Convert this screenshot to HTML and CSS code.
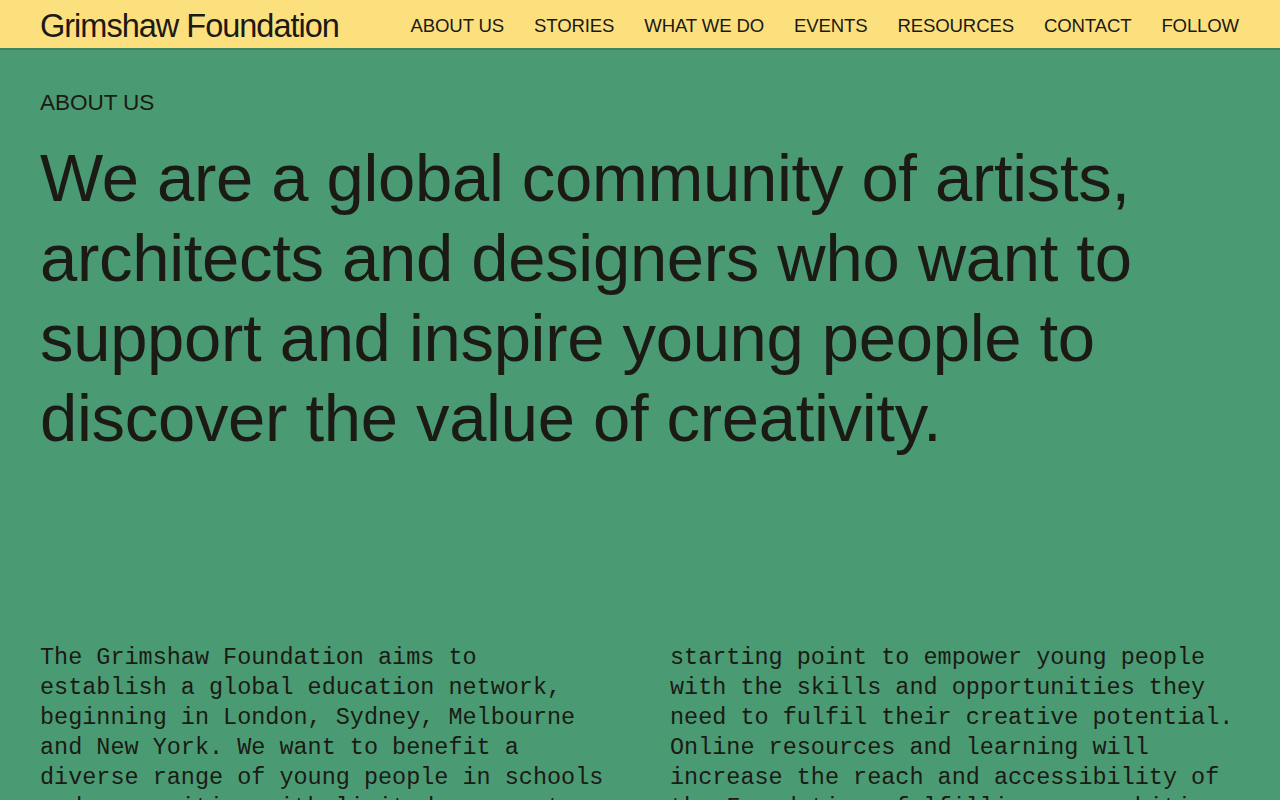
FILE: index.html
```html
<!DOCTYPE html>
<html lang="en">
<head>
<meta charset="utf-8">
<title>Grimshaw Foundation — About us</title>
<link rel="stylesheet" href="styles.css">
</head>
<body>
<header class="site-header">
  <a class="logo" href="#">Grimshaw Foundation</a>
  <nav class="nav">
    <a href="#">ABOUT US</a>
    <a href="#">STORIES</a>
    <a href="#">WHAT WE DO</a>
    <a href="#">EVENTS</a>
    <a href="#">RESOURCES</a>
    <a href="#">CONTACT</a>
    <a href="#">FOLLOW</a>
  </nav>
</header>
<main class="about">
  <p class="label">ABOUT US</p>
  <h1 class="headline">We are a global community of artists, architects and designers who want to support and inspire young people to discover the value of creativity.</h1>
  <div class="body-text">
    <p>The Grimshaw Foundation aims to establish a global education network, beginning in London, Sydney, Melbourne and New York. We want to benefit a diverse range of young people in schools and communities with limited access to creative learning, providing a</p>
    <p>starting point to empower young people with the skills and opportunities they need to fulfil their creative potential. Online resources and learning will increase the reach and accessibility of the Foundation, fulfilling our ambition to reach young people everywhere.</p>
  </div>
</main>
</body>
</html>
```

FILE: styles.css
```css
html, body {
  margin: 0;
  padding: 0;
}

body {
  background: #4a9a74;
  color: #1b1a15;
  font-family: "Liberation Sans", Arial, sans-serif;
  height: 800px;
  overflow: hidden;
}

a {
  color: inherit;
  text-decoration: none;
}

.site-header {
  display: flex;
  align-items: center;
  justify-content: space-between;
  height: 48px;
  padding: 0 41px 0 40px;
  background: #fde07e;
  border-bottom: 2px solid #3e8660;
}

.logo {
  font-size: 32.5px;
  letter-spacing: -1px;
  line-height: 48px;
  padding-top: 3px;
}

.nav {
  display: flex;
  gap: 30px;
  padding-top: 3px;
}

.nav a {
  font-size: 18.6px;
  letter-spacing: -0.15px;
  line-height: 48px;
}

.about {
  padding: 40px 40px 0;
}

.label {
  margin: 0;
  font-size: 22.6px;
  line-height: 26px;
  letter-spacing: -0.1px;
}

.headline {
  margin: 22px 0 0;
  font-weight: 400;
  font-size: 67px;
  line-height: 80px;
  letter-spacing: -0.3px;
  max-width: 1150px;
}

.body-text {
  margin-top: 185px;
  display: grid;
  grid-template-columns: 1fr 1fr;
  column-gap: 60px;
  font-family: "Liberation Mono", "Courier New", monospace;
  font-size: 23.47px;
  line-height: 30px;
}

.body-text p {
  margin: 0;
}
```
